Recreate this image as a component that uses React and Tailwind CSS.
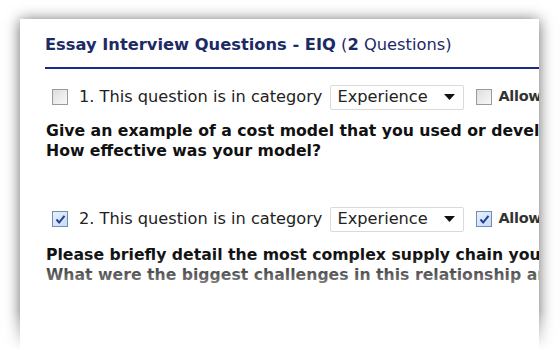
const font = { fontFamily: '"DejaVu Sans", Verdana, sans-serif' };

const Box = ({ checked }) => (
  <span
    className={`shrink-0 w-[16px] h-[16px] border flex items-center justify-center ${
      checked
        ? 'border-[#6f8fb8] bg-linear-to-br from-[#e6f0fb] to-[#c9dcf2]'
        : 'border-[#9a9a9a] bg-linear-to-br from-[#dedede] to-[#f8f8f8]'
    }`}
  >
    {checked && (
      <svg width="11" height="11" viewBox="0 0 11 11">
        <path d="M1.5 5.5 L4.2 8.5 L9.5 1.8" fill="none" stroke="#1f3f9a" strokeWidth="2" />
      </svg>
    )}
  </span>
);

const Row = ({ n, checked }) => (
  <div className="flex items-center h-[26px] whitespace-nowrap text-[16.2px] text-[#222]">
    <span className="ml-[7px]"><Box checked={checked} /></span>
    <span className="ml-[11px]">{n}. This question is in category</span>
    <span className="ml-[8px] shrink-0 w-[134px] h-[25px] border border-[#dadada] rounded-[2px] bg-white flex items-center justify-between pl-[6px] pr-[8px]">
      <span>Experience</span>
      <svg width="11" height="6" viewBox="0 0 11 6"><path d="M0 0 H11 L5.5 6 Z" fill="#111" /></svg>
    </span>
    <span className="ml-[12px]"><Box checked={checked} /></span>
    <span className="ml-[6px] font-bold text-[14.5px] tracking-[-0.3px] text-[#333]">Allow</span>
  </div>
);

export default function App() {
  return (
    <div className="relative w-[560px] h-[350px] bg-white overflow-hidden pt-[19px] pl-[20px]" style={font}>
      <div className="relative w-[519px] h-[360px] bg-white overflow-hidden shadow-[0_1px_14px_rgba(0,0,0,0.6)]">
        <div className="pl-[25px] pt-[16px]">
          <h1 className="h-[20px] leading-[20px] text-[16.3px] text-[#1c2a66] whitespace-nowrap">
            <span className="font-bold">Essay Interview Questions - EIQ</span>{' '}
            (<span className="font-bold">2</span> Questions)
          </h1>
          <div className="mt-[12px] h-[2px] bg-[#1a2a86]" />
          <div className="mt-[15px]"><Row n={1} /></div>
          <p className="mt-[11px] ml-[1px] text-[15.7px] leading-[20px] font-bold text-[#111] whitespace-nowrap">
            Give an example of a cost model that you used or developed.<br />
            How effective was your model?
          </p>
          <div className="mt-[45px]"><Row n={2} checked /></div>
          <p className="mt-[13px] ml-[1px] text-[15.7px] leading-[20px] font-bold text-[#111] whitespace-nowrap">
            Please briefly detail the most complex supply chain you have managed.<br />
            What were the biggest challenges in this relationship and how did you solve them?
          </p>
        </div>
        <div className="absolute inset-x-0 top-[236px] bottom-0 bg-linear-to-b from-white/0 to-white to-[50%]" />
      </div>
      <div className="absolute inset-x-0 bottom-0 h-[40px] bg-linear-to-b from-white/0 to-white" />
    </div>
  );
}
